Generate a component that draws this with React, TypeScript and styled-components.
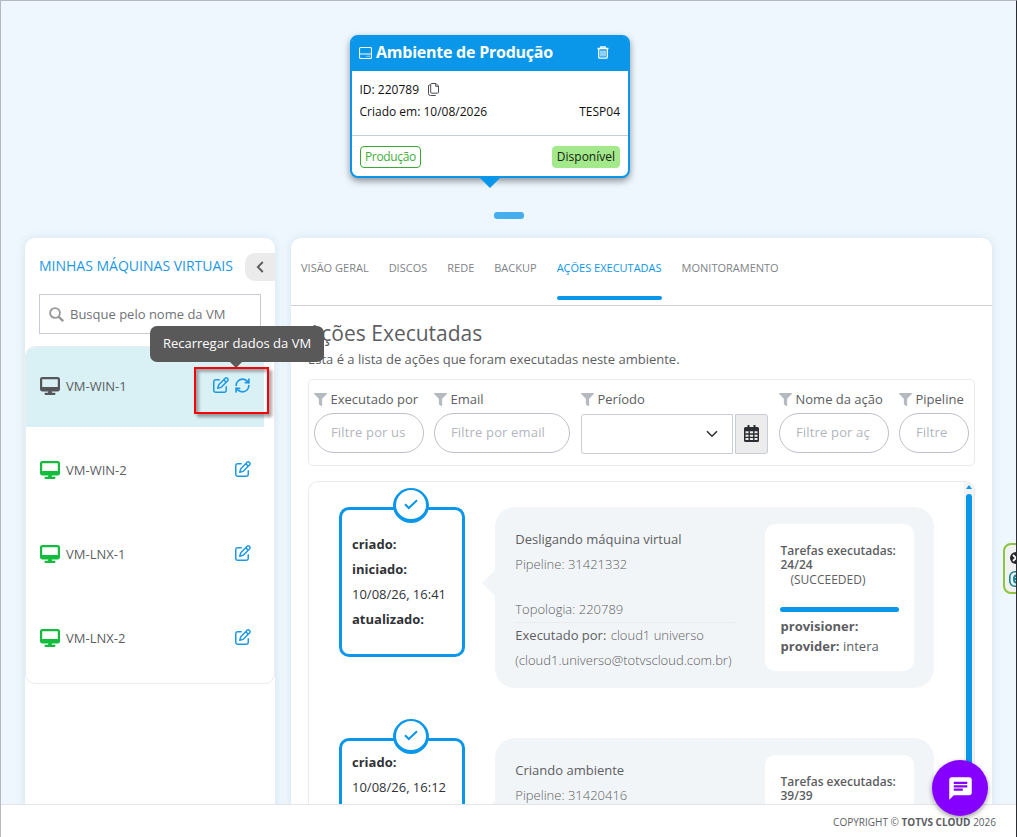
import React from "react";
import styled, { createGlobalStyle, css } from "styled-components";
import { FaFilter } from "react-icons/fa";
import { FaDesktop, FaRegPenToSquare } from "react-icons/fa6";
import { MdChat } from "react-icons/md";
import { RefreshCw } from "lucide-react";

const BLUE = "#0a97ea";

const Global = createGlobalStyle`
  * { box-sizing: border-box; }
  body { margin: 0; font-family: "Open Sans", sans-serif; font-size: 13px; color: #5c5e62; background: #fff; }
  svg { display: block; flex: none; }
`;

const Page = styled.div`
  position: relative;
  width: 1017px;
  height: 837px;
  overflow: hidden;
  display: flex;
  flex-direction: column;
  border-left: 1px solid #b5b9c6;
  border-top: 1px solid #b5b9c6;
  border-right: 1px solid #2b2d33;
`;

const Main = styled.main`
  height: 803px;
  flex: none;
  overflow: hidden;
  display: flex;
  flex-direction: column;
  background: #eef7fe;
`;

const Footer = styled.footer`
  flex: 1;
  border-top: 1px solid #e4e5e8;
  display: flex;
  justify-content: flex-end;
  padding: 10px 20px 0 0;
  font-size: 10px;
  line-height: 14px;
  white-space: pre;
`;

const Stage = styled.section`
  height: 237px;
  flex: none;
  padding-top: 34px;
  display: flex;
  flex-direction: column;
  align-items: center;
`;

const EnvCard = styled.article`
  width: 280px;
  height: 143px;
  margin-right: 37px;
  border: 2px solid ${BLUE};
  border-radius: 8px;
  background: #fff;
  color: #111;
  font-size: 12px;
  display: flex;
  flex-direction: column;
  box-shadow: 0 3px 7px rgba(0, 0, 0, 0.42);
`;

const EnvHeader = styled.header`
  height: 34px;
  display: flex;
  align-items: center;
  gap: 4px;
  padding: 0 19px 3px 7px;
  background: ${BLUE};
  border-radius: 5px 5px 0 0;
  color: #fff;
  h1 { flex: 1; margin: 0 0 2px; font-size: 16px; letter-spacing: -0.24px; font-weight: 700; line-height: 20px; white-space: nowrap; }
`;

const EnvBody = styled.div`
  height: 65px;
  padding: 7px 8px 0 7.5px;
  border-bottom: 1px solid #c5ccd4;
`;

const EnvLine = styled.div`
  height: 22px;
  display: flex;
  align-items: center;
  justify-content: ${(p: { $split?: boolean }) => (p.$split ? "space-between" : "flex-start")};
  gap: 9px;
`;

const EnvFoot = styled.div`
  flex: 1;
  padding: 1px 8px 0;
  display: flex;
  align-items: center;
  justify-content: space-between;
`;

const Tag = styled.span<{ $solid?: boolean }>`
  height: 22px;
  line-height: 20px;
  padding: 0 4px;
  border-radius: 4px;
  font-size: 12px;
  letter-spacing: ${(p) => (p.$solid ? "0" : "-0.36px")};
  border: 1px solid ${(p) => (p.$solid ? "#a3e88b" : "#3aa935")};
  background: ${(p) => (p.$solid ? "#a3e88b" : "#fff")};
  color: ${(p) => (p.$solid ? "#14240f" : "#3fae3a")};
`;

const CardPointer = styled.div`
  width: 20px;
  height: 10px;
  margin-right: 37px;
  background: ${BLUE};
  clip-path: polygon(0 0, 100% 0, 50% 100%);
`;

const Pager = styled.div`
  width: 30px;
  height: 7px;
  margin-top: 24px;
  border-radius: 3px;
  background: #45afee;
`;

const Columns = styled.div`
  flex: 1;
  display: flex;
  gap: 16px;
  padding: 0 24px;
`;

const panel = css`
  background: #fff;
  border-radius: 10px 10px 0 0;
  box-shadow: 0 0 10px rgba(90, 120, 150, 0.16);
`;

const Sidebar = styled.aside`
  ${panel}
  width: 250px;
  display: flex;
  flex-direction: column;
`;

const SideHead = styled.div`
  margin-top: 15px;
  height: 28px;
  display: flex;
  justify-content: space-between;
  padding-left: 14px;
  color: #1b98e6;
  font-size: 14px;
  line-height: 25px;
  white-space: nowrap;
`;

const Collapse = styled.button`
  width: 30px;
  height: 28px;
  border: 0;
  padding: 0;
  display: grid;
  place-items: center;
  border-radius: 10px 0 0 10px;
  background: #ebebeb;
  color: #5a5a5a;
`;

const Search = styled.label`
  margin: 13px 14px 12px;
  height: 40px;
  border: 1px solid #c8ccd6;
  display: flex;
  align-items: center;
  gap: 6px;
  padding-left: 9px;
  color: #9a9a9a;
  span { color: #707276; }
`;

const VmList = styled.ul`
  list-style: none;
  margin: 0;
  padding: 0;
  height: 338px;
  border: 1px solid #ececee;
  border-radius: 10px;
  display: flex;
  flex-direction: column;
  gap: 4px;
  overflow: hidden;
`;

const VmRow = styled.li<{ $active?: boolean }>`
  height: 80px;
  width: 238px;
  flex: none;
  display: flex;
  align-items: center;
  padding: 0 13.5px 2px 14px;
  gap: 5px;
  background: ${(p) => (p.$active ? "#d9f0f4" : "transparent")};
  > span { flex: 1; padding-left: 1px; }
  > svg:first-child { color: ${(p) => (p.$active ? "#54565a" : "#12bc3c")}; }
  > svg:not(:first-child) { color: #1b98e6; margin-bottom: 2px; }
`;

const Panel = styled.section`
  ${panel}
  width: 701px;
  display: flex;
  flex-direction: column;
`;

const Tabs = styled.nav`
  height: 68px;
  flex: none;
  padding-left: 10px;
  display: flex;
  gap: 20px;
  border-bottom: 1px solid #cdd1d9;
`;

const Tab = styled.a<{ $active?: boolean }>`
  height: 62px;
  padding-top: 22px;
  font-size: 11px;
  line-height: 16px;
  color: ${(p) => (p.$active ? BLUE : "#808387")};
  display: flex;
  flex-direction: column;
  justify-content: space-between;
  white-space: nowrap;
  &::after {
    content: "";
    height: 4px;
    border-radius: 2px;
    background: ${(p) => (p.$active ? BLUE : "transparent")};
  }
`;

const Content = styled.div`
  flex: 1;
  display: flex;
  flex-direction: column;
  padding: 13px 17px 0;
  h2 { margin: 0; font-size: 21px; line-height: 28px; font-weight: 400; }
  > p { margin: 4px 0 11px; line-height: 17px; }
`;

const Filters = styled.div`
  height: 87px;
  flex: none;
  border: 1px solid #eaebed;
  border-radius: 5px;
  padding: 10px 5px 0;
  display: flex;
`;

const Field = styled.div<{ $w: number; $gap?: number }>`
  width: ${(p) => p.$w}px;
  margin-right: ${(p) => p.$gap ?? 10}px;
  flex: none;
`;

const FieldLabel = styled.div`
  height: 18px;
  display: flex;
  align-items: center;
  gap: 3.5px;
  white-space: nowrap;
  svg { color: #b5b9c0; }
`;

const Pill = styled.div`
  margin-top: 5px;
  height: 40px;
  border: 1px solid #bcc1c8;
  border-radius: 20px;
  padding: 0 16px;
  line-height: 37px;
  letter-spacing: 0.16px;
  color: #b2b6bd;
  white-space: nowrap;
  > span { display: block; overflow: hidden; }
`;

const DateRow = styled.div`
  margin-top: 6px;
  display: flex;
  gap: 2px;
`;

const Select = styled.div`
  width: 152px;
  height: 40px;
  border: 1px solid #c9cdd5;
  border-radius: 3px 0 0 3px;
  display: flex;
  align-items: center;
  justify-content: flex-end;
  padding-right: 14px;
`;

const CalButton = styled.button`
  width: 33px;
  height: 40px;
  padding: 0 0 1px;
  border: 1px solid #c9cdd5;
  border-radius: 0 3px 3px 0;
  background: #ececec;
  color: #2b2d30;
  display: grid;
  place-items: center;
`;

const Log = styled.div`
  flex: 1;
  margin-top: 15px;
  height: 0;
  border: 1px solid #eaebed;
  border-bottom: 0;
  border-radius: 10px 10px 0 0;
  display: flex;
  overflow: hidden;
`;

const LogItems = styled.div`
  flex: 1;
  padding: 25px 0 0 30px;
  display: flex;
  flex-direction: column;
  gap: 50px;
`;

const ScrollTrack = styled.div`
  width: 10px;
  background: #f3f3f4;
  display: flex;
  flex-direction: column;
  align-items: center;
  padding-top: 3px;
  gap: 5px;
`;

const ScrollThumb = styled.div`
  width: 6px;
  flex: 1;
  border-radius: 3px 3px 0 0;
  background: ${BLUE};
`;

const LogRow = styled.div`
  display: flex;
  align-items: flex-start;
  height: 181px;
  flex: none;
`;

const DateCard = styled.div<{ $tight?: boolean }>`
  position: relative;
  width: 126px;
  height: 150px;
  border: 3px solid ${BLUE};
  border-radius: 10px;
  padding: ${(p) => (p.$tight ? 9 : 22)}px 0 0 10px;
  color: #303236;
  line-height: 25px;
  white-space: nowrap;
`;

const Check = styled.div`
  position: absolute;
  left: 51px;
  top: -22px;
  width: 36px;
  height: 35px;
  border-radius: 50%;
  border: 3px solid ${BLUE};
  border-width: 2px 3px 4px;
  background: #fff;
  display: grid;
  place-items: center;
`;

const Bubble = styled.div`
  position: relative;
  margin-left: 30px;
  width: 439px;
  height: 181px;
  border-radius: 20px;
  background: #f2f5f8;
  display: flex;
  justify-content: space-between;
  padding: 17px 20px 0;
  &::before {
    content: "";
    position: absolute;
    left: -13px;
    top: 63px;
    width: 13px;
    height: 26px;
    background: #f2f5f8;
    clip-path: polygon(100% 0, 100% 100%, 0 50%);
  }
`;

const Details = styled.div`
  width: 220px;
  padding: 3px 0 0 0.3px;
  line-height: 25px;
  font-weight: 300;
  white-space: nowrap;
  b { font-weight: 400; }
  div > b { margin-right: 1px; }
`;

const Topology = styled.div`
  height: 26px;
  margin-top: 20px;
  border-bottom: 1px solid #e9ebed;
`;

const Tasks = styled.div`
  width: 149px;
  height: 147px;
  border-radius: 10px;
  background: #fff;
  padding: 20px 15px 0;
  white-space: nowrap;
  font-size: 12px;
  line-height: 14px;
  strong { font-weight: 600; display: block; padding-left: 0.5px; }
  em { font-style: normal; display: block; padding-left: 10.5px; line-height: 15px; }
`;

const Progress = styled.div`
  height: 5px;
  border-radius: 3px;
  background: ${BLUE};
  margin: 20px 0 4px;
`;

const Meta = styled.div`
  height: 20px;
  line-height: 20px;
  padding-left: 0.5px;
  font-size: 13px;
`;

const Tooltip = styled.div`
  position: absolute;
  left: 149px;
  top: 325px;
  width: 174px;
  height: 36px;
  border-radius: 7px;
  background: #595959;
  color: #fff;
  text-align: center;
  line-height: 34px;
  white-space: nowrap;
  &::after {
    content: "";
    position: absolute;
    left: 80px;
    top: 36px;
    width: 12px;
    height: 6px;
    background: #595959;
    clip-path: polygon(0 0, 100% 0, 50% 100%);
  }
`;

const Highlight = styled.div`
  position: absolute;
  left: 193px;
  top: 366px;
  width: 75px;
  height: 47px;
  border: 2px solid #fb0007;
  box-shadow: 3px 3px 3px rgba(0, 0, 0, 0.35), inset 3px 3px 3px rgba(0, 0, 0, 0.3);
`;

const ChatButton = styled.button`
  position: absolute;
  left: 931px;
  top: 759px;
  width: 56px;
  height: 56px;
  border: 0;
  padding: 0;
  border-radius: 50%;
  background: #8500ff;
  color: #fff;
  display: grid;
  place-items: center;
  box-shadow: 0 2px 5px rgba(0, 0, 0, 0.4);
`;

const EdgeWidget = styled.div`
  position: absolute;
  left: 1002px;
  top: 542px;
  width: 30px;
  height: 51px;
  border: 2px solid #8bc53f;
  border-radius: 8px;
  background: #f1f1f1;
  padding: 7px 0 0 5px;
  display: flex;
  flex-direction: column;
  gap: 7px;
  svg + svg { margin-left: -1px; }
`;

const Chevron = () => (
  <svg width="12" height="8" viewBox="0 0 12 8" fill="none" stroke="#2e3135" strokeWidth="1.6">
    <path d="M1 1.2 6 6.2 11 1.2" />
  </svg>
);

const BackIcon = () => (
  <svg width="8" height="12" viewBox="0 0 8 12" fill="none" stroke="#5a5a5a" strokeWidth="1.8">
    <path d="M6.8 1 1.8 6l5 5" />
  </svg>
);

const SearchIcon = () => (
  <svg width="15" height="15" viewBox="0 0 15 15" fill="none" stroke="currentColor" strokeWidth="1.9">
    <circle cx="6" cy="6" r="4.9" />
    <path d="m9.6 9.6 4.6 4.6" strokeWidth="2.4" />
  </svg>
);

const DiskIcon = () => (
  <svg width="13" height="12" viewBox="0 0 13 12" fill="none" stroke="#fff" strokeWidth="1.1">
    <rect x=".5" y=".5" width="12" height="11" rx="1.2" />
    <path d="M.5 7h12M7.500 9.200h1M9.500 9.200h1.300" />
  </svg>
);

const CopyIcon = () => (
  <svg width="11" height="13" viewBox="0 0 11 13" fill="none" stroke="#4a4d52" strokeWidth="1">
    <path d="M3.7.5H8L10.5 3v6.200q0 1-1 1H3.700q-1 0-1-1V1.500q0-1 1-1zM7.700.7v2.600h2.600M2.700 2H1.500q-1 0-1 1v7.500q0 2 2 2h5.300" />
  </svg>
);

const TrashIcon = () => (
  <svg width="12" height="13" viewBox="0 0 12 13" fill="none" stroke="#fff" strokeWidth="1.3">
    <path d="M.5 2.5h11M3.8 2.3V.8h4.4v1.500M1.700 3v8q0 1.200 1.200 1.200h6.200q1.200 0 1.200-1.200V3" />
    <path d="M4 4.500v6M6 4.500v6M8 4.500v6" strokeWidth="1.1" />
  </svg>
);

const CalendarIcon = () => (
  <svg width="15" height="17" viewBox="0 0 15 17">
    <path d="M3.500 0h2v2h4V0h2v2H13.500Q15 2 15 3.500v12Q15 17 13.500 17h-12Q0 17 0 15.500v-12Q0 2 1.500 2h2z" fill="currentColor" />
    <path d="M1.500 6.300h3v2h-3zM5.900 6.300h3.200v2H5.900zM10.500 6.300h3v2h-3zM1.500 9.700h3v2h-3zM5.900 9.700h3.200v2H5.900zM10.500 9.700h3v2h-3zM1.500 13.100h3v2h-3zM5.900 13.100h3.200v2H5.900zM10.500 13.100h3v2h-3z" fill="#ececec" />
  </svg>
);

const FieldHead = ({ children }: { children: React.ReactNode }) => (
  <FieldLabel>
    <FaFilter size={13} />
    {children}
  </FieldLabel>
);

const TextFilter = ({ label, hint, w, gap }: { label: string; hint: string; w: number; gap?: number }) => (
  <Field $w={w} $gap={gap}>
    <FieldHead>{label}</FieldHead>
    <Pill><span>{hint}</span></Pill>
  </Field>
);

type Action = { name: string; pipeline: string; dates: [string, string?][]; tasks: string; tight?: boolean };

const actions: Action[] = [
  {
    name: "Desligando máquina virtual",
    pipeline: "31421332",
    dates: [["criado:"], ["iniciado:", "10/08/26, 16:41"], ["atualizado:"]],
    tasks: "24/24",
  },
  { name: "Criando ambiente", pipeline: "31420416", dates: [["criado:", "10/08/26, 16:12"]], tasks: "39/39", tight: true },
];

const ActionRow = ({ a }: { a: Action }) => (
  <LogRow>
    <DateCard $tight={a.tight}>
      <Check>
        <svg width="14" height="11" viewBox="0 0 14 11" fill="none" stroke={BLUE} strokeWidth="2">
          <path d="M1 5.3 4.8 9 13 1.2" />
        </svg>
      </Check>
      {a.dates.map(([k, v]) => (
        <div key={k}>
          <b>{k}</b>
          {v && <div>{v}</div>}
        </div>
      ))}
    </DateCard>
    <Bubble>
      <Details>
        <b>{a.name}</b>
        <div>Pipeline: {a.pipeline}</div>
        {!a.tight && (
          <>
            <Topology>Topologia: 220789</Topology>
            <div><b>Executado por:</b> cloud1 universo</div>
            <div>(cloud1.universo@totvscloud.com.br)</div>
          </>
        )}
      </Details>
      <Tasks>
        <strong>Tarefas executadas:<br />{a.tasks}</strong>
        {!a.tight && (
          <>
            <em>(SUCCEEDED)</em>
            <Progress />
            <Meta><b>provisioner:</b></Meta>
            <Meta><b>provider:</b> intera</Meta>
          </>
        )}
      </Tasks>
    </Bubble>
  </LogRow>
);

const vms = ["VM-WIN-1", "VM-WIN-2", "VM-LNX-1", "VM-LNX-2"];
const tabs = ["VISÃO GERAL", "DISCOS", "REDE", "BACKUP", "AÇÕES EXECUTADAS", "MONITORAMENTO"];

export default function App() {
  return (
    <Page>
      <Global />
      <Main>
        <Stage>
          <EnvCard>
            <EnvHeader>
              <DiskIcon />
              <h1>Ambiente de Produção</h1>
              <TrashIcon />
            </EnvHeader>
            <EnvBody>
              <EnvLine>ID: 220789 <CopyIcon /></EnvLine>
              <EnvLine $split><span>Criado em: 10/08/2026</span><span>TESP04</span></EnvLine>
            </EnvBody>
            <EnvFoot>
              <Tag>Produção</Tag>
              <Tag $solid>Disponível</Tag>
            </EnvFoot>
          </EnvCard>
          <CardPointer />
          <Pager />
        </Stage>
        <Columns>
          <Sidebar>
            <SideHead>
              MINHAS MÁQUINAS VIRTUAIS
              <Collapse><BackIcon /></Collapse>
            </SideHead>
            <Search><SearchIcon /><span>Busque pelo nome da VM</span></Search>
            <VmList>
              {vms.map((vm, i) => (
                <VmRow key={vm} $active={i === 0}>
                  <FaDesktop size={20} />
                  <span>{vm}</span>
                  <FaRegPenToSquare size={16} />
                  {i === 0 && <RefreshCw size={17} strokeWidth={2.3} />}
                </VmRow>
              ))}
            </VmList>
          </Sidebar>
          <Panel>
            <Tabs>
              {tabs.map((t) => <Tab key={t} $active={t === "AÇÕES EXECUTADAS"}>{t}</Tab>)}
            </Tabs>
            <Content>
              <h2>Ações Executadas</h2>
              <p>Esta é a lista de ações que foram executadas neste ambiente.</p>
              <Filters>
                <TextFilter label="Executado por" hint="Filtre por us" w={110} />
                <TextFilter label="Email" hint="Filtre por email" w={136} gap={11} />
                <Field $w={187} $gap={11}>
                  <FieldHead>Período</FieldHead>
                  <DateRow>
                    <Select><Chevron /></Select>
                    <CalButton><CalendarIcon /></CalButton>
                  </DateRow>
                </Field>
                <TextFilter label="Nome da ação" hint="Filtre por aç" w={110} />
                <TextFilter label="Pipeline" hint="Filtre" w={70} gap={0} />
              </Filters>
              <Log>
                <LogItems>
                  {actions.map((a) => <ActionRow key={a.pipeline} a={a} />)}
                </LogItems>
                <ScrollTrack>
                  <svg width="6" height="4" viewBox="0 0 6 4"><path d="M3 0 6 4H0z" fill={BLUE} /></svg>
                  <ScrollThumb />
                </ScrollTrack>
              </Log>
            </Content>
          </Panel>
        </Columns>
      </Main>
      <Footer>COPYRIGHT © <b>TOTVS CLOUD</b> 2026</Footer>
      <Tooltip>Recarregar dados da VM</Tooltip>
      <Highlight />
      <ChatButton><MdChat size={27} /></ChatButton>
      <EdgeWidget>
        <svg width="12" height="12" viewBox="0 0 12 12"><circle cx="6" cy="6" r="6" fill="#25272c" /><path d="m3 3 6 6M9 3 3 9" stroke="#fff" strokeWidth="1.8" /></svg>
        <svg width="16" height="16" viewBox="0 0 16 16" fill="none" stroke="#178591" strokeWidth="1.6"><rect x=".8" y=".8" width="14.4" height="14.4" rx="5" /><path d="M11 4.500H7Q5 4.500 5 8t2 3.500h4M5 8h5" strokeWidth="2" /></svg>
      </EdgeWidget>
    </Page>
  );
}
